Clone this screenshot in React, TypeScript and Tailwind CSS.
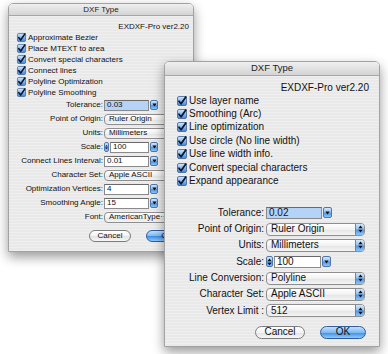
import React from "react";

const BLUE =
  "bg-[linear-gradient(to_bottom,#d3e8fd_0%,#93c3f3_45%,#4f97e6_55%,#8cc6f8_100%)]";

function Check({ size }: { size: number }) {
  return (
    <svg width={size} height={size} viewBox="0 0 10 10" className="shrink-0 overflow-visible">
      <defs>
        <linearGradient id="cbg" x1="0" y1="0" x2="0" y2="1">
          <stop offset="0" stopColor="#d6e9fd" />
          <stop offset="0.5" stopColor="#86b9ef" />
          <stop offset="1" stopColor="#3e86db" />
        </linearGradient>
      </defs>
      <rect x="0.5" y="0.5" width="9" height="9" rx="1.5" fill="url(#cbg)" stroke="#3d5f90" strokeWidth="0.8" />
      <path d="M2 5.2 L4.1 7.8 L8.8 1" fill="none" stroke="#0a1730" strokeWidth="1.8" strokeLinecap="round" strokeLinejoin="round" />
    </svg>
  );
}

function UpDown() {
  return (
    <svg width="5" height="8" viewBox="0 0 5 8">
      <path d="M2.5 0.6 L4.6 3.2 L0.4 3.2 Z M2.5 7.4 L4.6 4.8 L0.4 4.8 Z" fill="#101010" />
    </svg>
  );
}

function Down() {
  return (
    <svg width="5" height="4" viewBox="0 0 5 4">
      <path d="M0.4 0.6 L4.6 0.6 L2.5 3.4 Z" fill="#101010" />
    </svg>
  );
}

function Popup({ text, className }: { text: string; className: string }) {
  return (
    <div
      className={
        "flex items-stretch overflow-hidden rounded-[4px] border border-[#8e8e8e] bg-[linear-gradient(to_bottom,#ffffff,#f1f1f1_50%,#e4e4e4_51%,#f4f4f4)] " +
        className
      }
    >
      <div className="flex flex-1 items-center overflow-hidden whitespace-nowrap pl-[4px]">{text}</div>
      <div className={"flex w-[9px] items-center justify-center border-l border-[#5a87c4] " + BLUE}>
        <UpDown />
      </div>
    </div>
  );
}

function Combo({
  text,
  sel,
  fieldClass,
  arrowClass,
  stepper,
}: {
  text: string;
  sel?: boolean;
  fieldClass: string;
  arrowClass: string;
  stepper?: string;
}) {
  return (
    <div className="flex items-center gap-[1px]">
      {stepper ? (
        <div className={"flex items-center justify-center rounded-[2px] border border-[#4f76ad] " + BLUE + " " + stepper}>
          <UpDown />
        </div>
      ) : null}
      <div
        className={
          "flex items-center border border-[#8a8a8a] border-t-[#6a6a6a] pl-[2px] " +
          (sel ? "bg-[#b5d3f7] " : "bg-white ") +
          fieldClass
        }
      >
        {text}
      </div>
      <div className={"flex items-center justify-center rounded-[2px] border border-[#4f76ad] " + BLUE + " " + arrowClass}>
        <Down />
      </div>
    </div>
  );
}

function Window({
  className,
  title,
  titleClass,
  children,
}: {
  className: string;
  title: string;
  titleClass: string;
  children: React.ReactNode;
}) {
  return (
    <div
      className={
        "absolute flex flex-col overflow-hidden rounded-t-[5px] border border-[#a2a2a2] shadow-[0_5px_12px_rgba(0,0,0,0.4)] " +
        className
      }
    >
      <div
        className={
          "flex shrink-0 items-center justify-center border-b border-[#a6a6a6] bg-[linear-gradient(to_bottom,#efefef,#d4d4d4)] text-[#222] " +
          titleClass
        }
      >
        {title}
      </div>
      <div className="flex flex-1 flex-col bg-[repeating-linear-gradient(to_bottom,#efefef_0px,#efefef_1.5px,#e9e9e9_1.5px,#e9e9e9_3px)] text-[#111]">
        {children}
      </div>
    </div>
  );
}

function Row1({ label, children }: { label: string; children: React.ReactNode }) {
  return (
    <div className="flex h-[14px] items-center">
      <div className="w-[94px] whitespace-nowrap text-right">{label}</div>
      <div className="ml-[1px]">{children}</div>
    </div>
  );
}

function Row2({ label, children }: { label: string; children: React.ReactNode }) {
  return (
    <div className="flex h-[16.3px] items-center">
      <div className="w-[99px] whitespace-nowrap text-right">{label}</div>
      <div className="ml-[2px]">{children}</div>
    </div>
  );
}

const checks1 = [
  "Approximate Bezier",
  "Place MTEXT to area",
  "Convert special characters",
  "Connect lines",
  "Polyline Optimization",
  "Polyline Smoothing",
];

const checks2 = [
  "Use layer name",
  "Smoothing (Arc)",
  "Line optimization",
  "Use circle (No line width)",
  "Use line width info.",
  "Convert special characters",
  "Expand appearance",
];

export default function App() {
  return (
    <div className="relative h-[354px] w-[388px] overflow-hidden bg-white font-['Liberation_Sans',Arial,sans-serif]">
      {/* Window 1 */}
      <Window className="left-[8px] top-[3px] h-[249px] w-[186px]" title="DXF Type" titleClass="h-[12px] text-[8px]">
        <div className="flex flex-col text-[8px] leading-none">
          <div className="mt-[5px] flex h-[11px] items-center justify-end pr-[4px]">EXDXF-Pro ver2.20</div>
          {checks1.map((c) => (
            <div key={c} className="flex h-[11px] items-center gap-[2px] pl-[8px]">
              <Check size={9} />
              <span className="whitespace-nowrap">{c}</span>
            </div>
          ))}
          <Row1 label="Tolerance:">
            <Combo text="0.03" sel fieldClass="h-[11px] w-[45px]" arrowClass="h-[10px] w-[8px]" />
          </Row1>
          <Row1 label="Point of Origin:">
            <Popup text="Ruler Origin" className="h-[11px] w-[80px]" />
          </Row1>
          <Row1 label="Units:">
            <Popup text="Millimeters" className="h-[11px] w-[80px]" />
          </Row1>
          <Row1 label="Scale:">
            <Combo text="100" stepper="h-[10px] w-[5px]" fieldClass="h-[11px] w-[39px]" arrowClass="h-[10px] w-[8px]" />
          </Row1>
          <Row1 label="Connect Lines Interval:">
            <Combo text="0.01" fieldClass="h-[11px] w-[45px]" arrowClass="h-[10px] w-[8px]" />
          </Row1>
          <Row1 label="Character Set:">
            <Popup text="Apple ASCII" className="h-[11px] w-[80px]" />
          </Row1>
          <Row1 label="Optimization Vertices:">
            <Combo text="4" fieldClass="h-[11px] w-[45px]" arrowClass="h-[10px] w-[8px]" />
          </Row1>
          <Row1 label="Smoothing Angle:">
            <Combo text="15" fieldClass="h-[11px] w-[45px]" arrowClass="h-[10px] w-[8px]" />
          </Row1>
          <Row1 label="Font:">
            <Popup text="AmericanType···" className="h-[11px] w-[80px]" />
          </Row1>
          <div className="mt-[6px] flex justify-end gap-[15px] pr-[5px]">
            <div className="flex h-[12px] w-[42px] items-center justify-center rounded-full border border-[#7c7c7c] bg-[linear-gradient(to_bottom,#ffffff,#f3f3f3_50%,#e2e2e2_51%,#f7f7f7)]">
              Cancel
            </div>
            <div className="flex h-[12px] w-[42px] items-center justify-center rounded-full border border-[#2f5d9f] bg-[linear-gradient(to_bottom,#c4e0fb,#7db9f1_50%,#3f8ae3_51%,#8ecbfa)]">
              OK
            </div>
          </div>
        </div>
      </Window>

      {/* Window 2 */}
      <Window className="left-[164px] top-[61px] h-[286px] w-[216px]" title="DXF Type" titleClass="h-[14px] text-[9.5px]">
        <div className="flex flex-col text-[10px] leading-none">
          <div className="mt-[6px] flex h-[12px] items-center justify-end pr-[10px]">EXDXF-Pro ver2.20</div>
          {checks2.map((c) => (
            <div key={c} className="flex h-[13.4px] items-center gap-[2px] pl-[12px]">
              <Check size={10} />
              <span className="whitespace-nowrap">{c}</span>
            </div>
          ))}
          <div className="mt-[17px]" />
          <Row2 label="Tolerance:">
            <Combo text="0.02" sel fieldClass="h-[12px] w-[56px]" arrowClass="h-[11px] w-[9px]" />
          </Row2>
          <Row2 label="Point of Origin:">
            <Popup text="Ruler Origin" className="h-[13px] w-[99px]" />
          </Row2>
          <Row2 label="Units:">
            <Popup text="Millimeters" className="h-[13px] w-[99px]" />
          </Row2>
          <Row2 label="Scale:">
            <Combo text="100" stepper="h-[11px] w-[7px]" fieldClass="h-[12px] w-[47px]" arrowClass="h-[11px] w-[9px]" />
          </Row2>
          <Row2 label="Line Conversion:">
            <Popup text="Polyline" className="h-[13px] w-[99px]" />
          </Row2>
          <Row2 label="Character Set:">
            <Popup text="Apple ASCII" className="h-[13px] w-[99px]" />
          </Row2>
          <Row2 label="Vertex Limit :">
            <Popup text="512" className="h-[13px] w-[99px]" />
          </Row2>
          <div className="mt-[7px] flex justify-end gap-[15px] pr-[13px]">
            <div className="flex h-[13px] w-[50px] items-center justify-center rounded-full border border-[#7c7c7c] bg-[linear-gradient(to_bottom,#ffffff,#f3f3f3_50%,#e2e2e2_51%,#f7f7f7)]">
              Cancel
            </div>
            <div className="flex h-[13px] w-[46px] items-center justify-center rounded-full border border-[#2f5d9f] bg-[linear-gradient(to_bottom,#c4e0fb,#7db9f1_50%,#3f8ae3_51%,#8ecbfa)]">
              OK
            </div>
          </div>
        </div>
      </Window>
    </div>
  );
}
